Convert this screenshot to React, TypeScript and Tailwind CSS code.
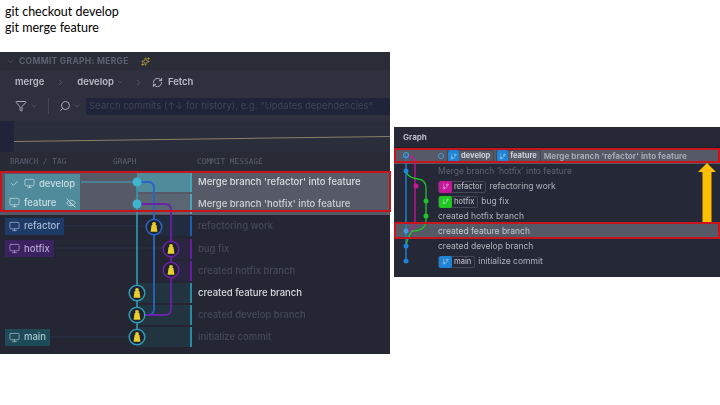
import { Check, ChevronDown, ChevronRight, EyeOff, Filter, GitBranch, Monitor, RefreshCw, Search, Sparkles } from 'lucide-react'

const branches = [
  { name: 'develop', cell: 'bg-[#4f8b9b] text-[#c9dde2]', check: true },
  { name: 'feature', cell: 'bg-[#4f8b9b] text-[#c9dde2]', hidden: true },
  { name: 'refactor', cell: 'bg-[#1e3a66] text-[#a8bad6]' },
  { name: 'hotfix', cell: 'bg-[#3b2360] text-[#b7a6d6]' },
  { name: '' },
  { name: '' },
  { name: '' },
  { name: 'main', cell: 'bg-[#1f4a58] text-[#a9c6cf]' }
]

const commits = [
  { text: "Merge branch 'refactor' into feature", bar: 'bg-[#4ba3b8]', color: 'text-[#dcdde2]' },
  { text: "Merge branch 'hotfix' into feature", bar: 'bg-[#4ba3b8]', color: 'text-[#cfd0d6]' },
  { text: 'refactoring work', bar: 'bg-[#1f5cb5]', color: 'text-[#454954]' },
  { text: 'bug fix', bar: 'bg-[#6a1fa0]', color: 'text-[#454954]' },
  { text: 'created hotfix branch', bar: 'bg-[#6a1fa0]', color: 'text-[#454954]' },
  { text: 'created feature branch', bar: 'bg-[#2a8ba3]', color: 'text-[#d8d9de]' },
  { text: 'created develop branch', bar: 'bg-[#2a8ba3]', color: 'text-[#454954]' },
  { text: 'initialize commit', bar: 'bg-[#2a8ba3]', color: 'text-[#454954]' }
]

const tints = [
  'w-[53px] bg-[#4f8b9b]',
  'w-[53px] bg-[#5a6672]',
  'w-[36px] bg-[#222c40]',
  'w-[19px] bg-[#2a2540]',
  'w-[19px] bg-[#2a2540]',
  'w-[53px] bg-[#223440]',
  'w-[53px] bg-[#223440]',
  'w-[53px] bg-[#223440]'
]

const history = [
  { text: 'Merge branch ‘hotfix’ into feature', dim: true },
  { tag: 'refactor', tagBg: 'bg-[#c8169a]', text: 'refactoring work' },
  { tag: 'hotfix', tagBg: 'bg-[#1fc81f]', text: 'bug fix' },
  { text: 'created hotfix branch' },
  { text: 'created feature branch', active: true },
  { text: 'created develop branch' },
  { tag: 'main', tagBg: 'bg-[#1d84d8]', text: 'initialize commit' }
]

function Avatar({ x, y, color }: { x: number; y: number; color: string }) {
  return (
    <g>
      <circle cx={x} cy={y} r="7.8" fill="#1f2330" stroke={color} strokeWidth="1.5" />
      <circle cx={x} cy={y - 3.2} r="1.9" fill="#e6cf2e" />
      <path d={`M${x - 3.4} ${y + 4.8} L${x - 2.4} ${y - 2} H${x + 2.4} L${x + 3.4} ${y + 4.8} Z`} fill="#e6cf2e" />
    </g>
  )
}

function LeftGraph() {
  return (
    <svg className="absolute left-0 top-0" width="190" height="178" fill="none">
      <path d="M81 11 H137" stroke="#3fa8c0" strokeWidth="1.2" />
      <path d="M64 55 H146 M55 77 H163 M50 166 H129" stroke="#2b3350" strokeWidth="0.8" />
      <path d="M137 11 V166" stroke="#2f9cb5" strokeWidth="1.6" />
      <path d="M137 11 H148 Q154 11 154 17 V138 Q154 144 148 144 H137" stroke="#2566c8" strokeWidth="1.8" />
      <path d="M137 33 H165 Q171 33 171 39 V138 Q171 144 165 144 H137" stroke="#6c21a8" strokeWidth="1.8" />
      <circle cx="137" cy="11" r="4.5" fill="#3fb4cf" />
      <circle cx="137" cy="33" r="4.5" fill="#3fb4cf" />
      <Avatar x={154} y={56} color="#2566c8" />
      <Avatar x={171} y={78} color="#6c21a8" />
      <Avatar x={171} y={99} color="#6c21a8" />
      <Avatar x={137} y={122} color="#2f9cb5" />
      <Avatar x={137} y={144} color="#2f9cb5" />
      <Avatar x={137} y={166} color="#2f9cb5" />
    </svg>
  )
}

function RightGraph() {
  return (
    <svg className="absolute left-0 top-0" width="44" height="130" fill="none">
      <path d="M12 7 V113" stroke="#1d84d8" strokeWidth="1.4" />
      <path d="M15 8 Q21 9 21 16 V72 Q21 82 13 84" stroke="#c8169a" strokeWidth="1.3" />
      <path d="M12 23 Q14 30 24 31 Q32 32 32 40 V72 Q32 83 18 83 Q14 88 12 98" stroke="#22c32a" strokeWidth="1.3" />
      <circle cx="12" cy="7" r="2.5" stroke="#3f9ad6" strokeWidth="1.2" />
      <circle cx="12" cy="23" r="2.5" fill="#1d84d8" />
      <circle cx="22" cy="38" r="2.5" fill="#c8169a" />
      <circle cx="32" cy="53" r="2.5" fill="#22c32a" />
      <circle cx="32" cy="68" r="2.5" fill="#22c32a" />
      <circle cx="12" cy="83" r="2.5" fill="#3f9ad6" />
      <circle cx="12" cy="98" r="2.5" fill="#1d84d8" />
      <circle cx="12" cy="113" r="2.5" fill="#1d84d8" />
    </svg>
  )
}

function CommitGraph() {
  return (
    <div className="relative w-[390px] shrink-0">
      <div className="h-[302px] w-[390px] overflow-hidden bg-[#242733] font-['Inter',sans-serif] blur-[0.4px]">
        <div className="flex h-[18px] items-center gap-1 bg-[#2a2d37] pl-[6px] text-[8.5px] font-bold tracking-[0.3px] text-[#5d6270]">
          <ChevronDown size={9} strokeWidth={1.5} />
          <span>COMMIT GRAPH: MERGE</span>
          <Sparkles size={9} className="ml-2 text-[#c9a93a]" />
        </div>
        <div className="h-[51px] bg-[#2e313d]">
          <div className="flex h-[24px] items-center pl-[15px] text-[9.5px] font-semibold text-[#b9bcc6]">
            <span>merge</span>
            <ChevronRight size={9} className="mx-[12px] text-[#5d6270]" />
            <span>develop</span>
            <ChevronDown size={8} className="ml-[2px] text-[#5d6270]" />
            <ChevronRight size={9} className="ml-[10px] text-[#5d6270]" />
            <RefreshCw size={11} className="ml-[9px] text-[#b9bcc6]" />
            <span className="ml-[5px]">Fetch</span>
          </div>
          <div className="flex h-[24px] items-center pl-[15px] text-[9.5px]">
            <Filter size={12} className="text-[#a9acb6]" />
            <ChevronDown size={8} className="ml-[3px] text-[#5d6270]" />
            <div className="ml-[10px] h-[16px] w-px bg-[#444854]" />
            <Search size={12} className="ml-[10px] -scale-x-100 text-[#a9acb6]" />
            <ChevronDown size={8} className="ml-[2px] text-[#5d6270]" />
            <div className="ml-[5px] flex h-[17px] flex-1 items-center whitespace-nowrap bg-[#20243a] pl-[3px] text-[#3f4456]">
              Search commits (↑↓ for history), e.g. "Updates dependencies"
            </div>
          </div>
        </div>
        <div className="flex h-[31px] bg-[#2a2d3a]">
          <div className="h-full w-[14px] bg-[#20233a]" />
          <div className="flex flex-1 items-center">
            <div className="h-px w-full translate-y-[2.5px] -rotate-[0.75deg] bg-[#8a7f68]" />
          </div>
        </div>
        <div className="flex h-[19px] items-center bg-[#282b36] font-['DejaVu_Sans_Mono',monospace] text-[7.8px] text-[#5b6070]">
          <span className="w-[113px] pl-[10px]">BRANCH / TAG</span>
          <span className="w-[84px]">GRAPH</span>
          <span>COMMIT MESSAGE</span>
        </div>
        <div className="relative">
          {commits.map((commit, i) => (
            <div key={commit.text} className={`flex h-[22.2px] items-center ${i < 2 ? 'bg-[#565a66]' : ''}`}>
              <div className={`flex h-full w-[137px] pl-[5px] ${i === 0 ? 'items-end' : i === 1 ? 'items-start' : 'items-center'}`}>
                {branches[i].name && (
                  <div
                    className={`flex items-center gap-[4px] px-[4px] text-[9.5px] font-medium ${branches[i].cell} ${
                      i < 2 ? 'h-[19px] w-[75px]' : 'h-[17px] w-fit'
                    }`}
                  >
                    {branches[i].check && <Check size={9} className="mx-[1px]" />}
                    <Monitor size={11} strokeWidth={1.5} />
                    <span>{branches[i].name}</span>
                    {branches[i].hidden && <EyeOff size={10} className="ml-auto" />}
                  </div>
                )}
              </div>
              <div className="flex w-[53px] justify-end">
                <div className={`h-[20px] ${tints[i]}`} />
              </div>
              <div className={`h-[20px] w-[2px] shrink-0 ${commit.bar}`} />
              <div className={`flex h-[22.2px] flex-1 items-center pl-[6px] text-[9.5px] font-medium ${commit.color}`}>
                {commit.text}
              </div>
            </div>
          ))}
          <LeftGraph />
        </div>
      </div>
      <div className="absolute left-0 top-[119px] h-[41px] w-[391px] border-2 border-[#c8141c]" />
    </div>
  )
}

function Tag({ name, bg, bold = false }: { name: string; bg: string; bold?: boolean }) {
  return (
    <span className="flex h-[12px] items-center rounded-[2px] border border-[#444854] pr-[3px] text-[7.5px]">
      <span className={`flex h-[12px] items-center justify-center rounded-[2px] ${bg} ${bold ? 'w-[11px]' : 'w-[13px]'}`}>
        <GitBranch size={7} className="text-[#d8e4ee]/70" />
      </span>
      <span className={`ml-[2px] ${bold ? 'font-bold text-[#cfd2da]' : 'font-medium text-[#b4b7c0]'}`}>{name}</span>
    </span>
  )
}

function RebasePanel() {
  return (
    <div className="relative mt-[75px] h-[150px] flex-1 overflow-hidden bg-[#252836] font-['Inter',sans-serif] text-[8.5px] text-[#b0b3bc] blur-[0.3px]">
      <div className="flex h-[21px] items-center border-b border-[#1e212c] bg-[#262935] pl-[9px] text-[8px] font-bold text-[#b9bcc6]">
        Graph
      </div>
      <div className="relative pt-[1px]">
        <div className="flex h-[15px] items-center gap-[2px] bg-[#565a66] pb-[1px] pl-[44px] text-[8.2px] font-bold text-[#b9bcc6]">
          <span className="mr-[1px] h-[6px] w-[6px] rounded-full border border-[#3f9ad6]" />
          <Tag name="develop" bg="bg-[#1d84d8]" bold />
          <Tag name="feature" bg="bg-[#1d84d8]" bold />
          <span className="ml-[1px] whitespace-nowrap text-[#a6a9b3]">Merge branch 'refactor' into feature</span>
        </div>
        {history.map((row) => (
          <div
            key={row.text}
            className={`flex h-[15px] items-center gap-[3px] pl-[44px] ${row.active ? 'bg-[#565a66] text-[#c4c6ce]' : ''} ${
              row.dim ? 'text-[#5f6370]' : ''
            }`}
          >
            {row.tag && <Tag name={row.tag} bg={row.tagBg ?? ''} />}
            <span className="whitespace-nowrap">{row.text}</span>
          </div>
        ))}
        <RightGraph />
      </div>
      <div className="absolute left-0 top-[21px] h-[15px] w-full border-2 border-[#c8141c]" />
      <div className="absolute left-0 top-[95px] h-[17px] w-full border-2 border-[#c8141c]" />
      <svg className="absolute left-[303px] top-[36px]" width="20" height="59">
        <path d="M10 0 L19 9 H14.5 V59 H5.5 V9 H1 Z" fill="#ffc000" />
      </svg>
    </div>
  )
}

export default function App() {
  return (
    <div className="h-[405px] w-[720px] overflow-hidden bg-white">
      <div className="h-[52px] pl-[5px] pt-[4px] font-['Lato',sans-serif] text-[12.5px] leading-[16px] text-black">
        <div>git checkout develop</div>
        <div>git merge feature</div>
      </div>
      <div className="flex gap-[4px]">
        <CommitGraph />
        <RebasePanel />
      </div>
    </div>
  )
}
